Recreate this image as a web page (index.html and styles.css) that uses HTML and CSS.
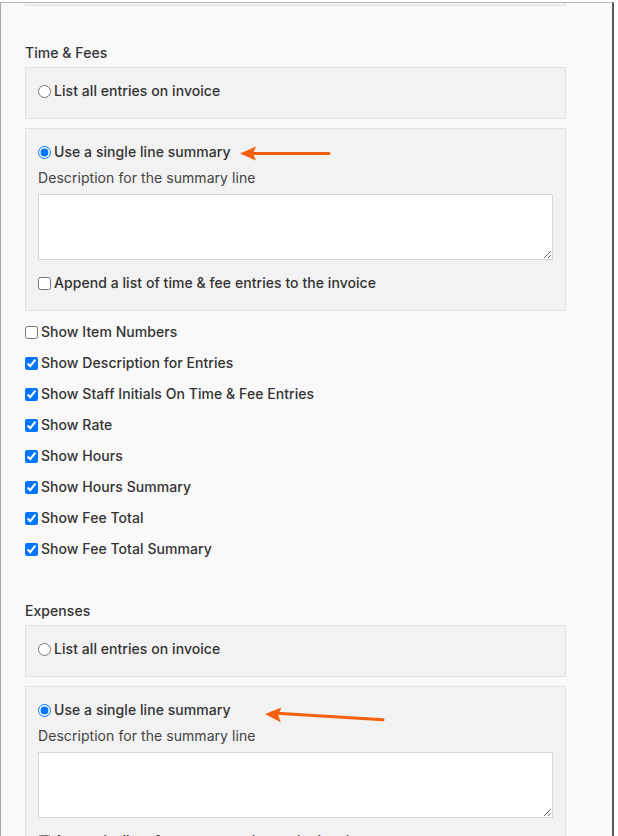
FILE: index.html
```html
<!DOCTYPE html>
<html>
<head>
<meta charset="utf-8">
<link rel="stylesheet" href="styles.css">
</head>
<body>
<div class="frame">
  <div class="stub"></div>

  <section class="group first">
    <h3 class="heading">Time &amp; Fees</h3>
    <div class="box">
      <label class="opt"><input type="radio" name="tf">List all entries on invoice</label>
    </div>
    <div class="box">
      <div class="opt-row">
        <label class="opt"><input type="radio" name="tf" checked>Use a single line summary</label>
        <svg class="arrow a1" width="92" height="16" viewBox="0 0 92 16"><path d="M12 7.5 H89" stroke="#f4600c" stroke-width="3" stroke-linecap="round"/><path d="M0 7.5 L16 0.5 L13 7.5 L16 14.5 Z" fill="#f4600c"/></svg>
      </div>
      <div class="desc">Description for the summary line</div>
      <textarea class="area"></textarea>
      <label class="opt append"><input type="checkbox">Append a list of time &amp; fee entries to the invoice</label>
    </div>
    <ul class="checks">
      <li><label class="opt"><input type="checkbox">Show Item Numbers</label></li>
      <li><label class="opt"><input type="checkbox" checked>Show Description for Entries</label></li>
      <li><label class="opt"><input type="checkbox" checked>Show Staff Initials On Time &amp; Fee Entries</label></li>
      <li><label class="opt"><input type="checkbox" checked>Show Rate</label></li>
      <li><label class="opt"><input type="checkbox" checked>Show Hours</label></li>
      <li><label class="opt"><input type="checkbox" checked>Show Hours Summary</label></li>
      <li><label class="opt"><input type="checkbox" checked>Show Fee Total</label></li>
      <li><label class="opt"><input type="checkbox" checked>Show Fee Total Summary</label></li>
    </ul>
  </section>

  <section class="group">
    <h3 class="heading">Expenses</h3>
    <div class="box">
      <label class="opt"><input type="radio" name="ex">List all entries on invoice</label>
    </div>
    <div class="box">
      <div class="opt-row">
        <label class="opt"><input type="radio" name="ex" checked>Use a single line summary</label>
        <svg class="arrow a2" width="122" height="18" viewBox="0 0 122 18"><path d="M12 6.2 L118 12.8" stroke="#f4600c" stroke-width="3" stroke-linecap="round"/><path d="M0 5.5 L16.5 -1 L13.2 6.3 L15.7 13.8 Z" fill="#f4600c" transform="translate(0 1.5)"/></svg>
      </div>
      <div class="desc">Description for the summary line</div>
      <textarea class="area"></textarea>
      <label class="opt append"><input type="checkbox">Append a list of expense entries to the invoice</label>
    </div>
  </section>
</div>
</body>
</html>
```

FILE: styles.css
```css
html, body {
  margin: 0;
  padding: 0;
  background: #ffffff;
  overflow: hidden;
}

body {
  font-family: Inter, "Liberation Sans", sans-serif;
  font-size: 14px;
  color: #333333;
  letter-spacing: 0.06px;
}

.frame {
  margin-top: 2px;
  width: 614px;
  height: 900px;
  background: #f9f9f9;
  border-top: 1px solid #b5b5b5;
  border-left: 1px solid #a8a8a8;
  border-right: 2px solid #5a5a5a;
  padding-left: 24px;
  box-sizing: border-box;
}

.stub {
  width: 539px;
  height: 2px;
  background: #f2f2f2;
  border: 1px solid #e2e2e2;
  border-top: none;
}

.group.first {
  margin-top: 37px;
}

.group {
  margin-top: 42px;
}

.heading {
  margin: 0 0 4px 0;
  font-size: 14px;
  font-weight: 500;
  line-height: 20px;
  color: #333;
}

.box {
  width: 541px;
  box-sizing: border-box;
  background: #f2f2f2;
  border: 1px solid #e2e2e2;
  padding: 13px 12px 17px 12px;
  margin-bottom: 9px;
}

.opt {
  display: inline-flex;
  align-items: center;
  font-weight: 500;
  line-height: 20px;
  color: #333;
}

.opt input {
  margin: 0 3px 0 0;
  width: 13px;
  height: 13px;
}

.opt-row {
  display: flex;
  align-items: center;
  height: 20px;
}

.arrow {
  display: block;
}

.a1 {
  margin-left: 9px;
  margin-top: 3px;
}

.a2 {
  margin-left: 34px;
  margin-top: 12px;
}

.desc {
  margin-top: 6px;
  line-height: 20px;
  color: #444;
  font-weight: 400;
}

.area {
  display: block;
  margin-top: 6px;
  width: 515px;
  height: 66px;
  box-sizing: border-box;
  border: 1px solid #d6d6d6;
  background: #fff;
  padding: 2px;
  font-family: inherit;
}

.append {
  margin-top: 13px;
}

.checks {
  list-style: none;
  margin: 11px 0 0 0;
  padding: 0;
  display: flex;
  flex-direction: column;
  gap: 11px;
}

.checks li {
  height: 20px;
}
```
